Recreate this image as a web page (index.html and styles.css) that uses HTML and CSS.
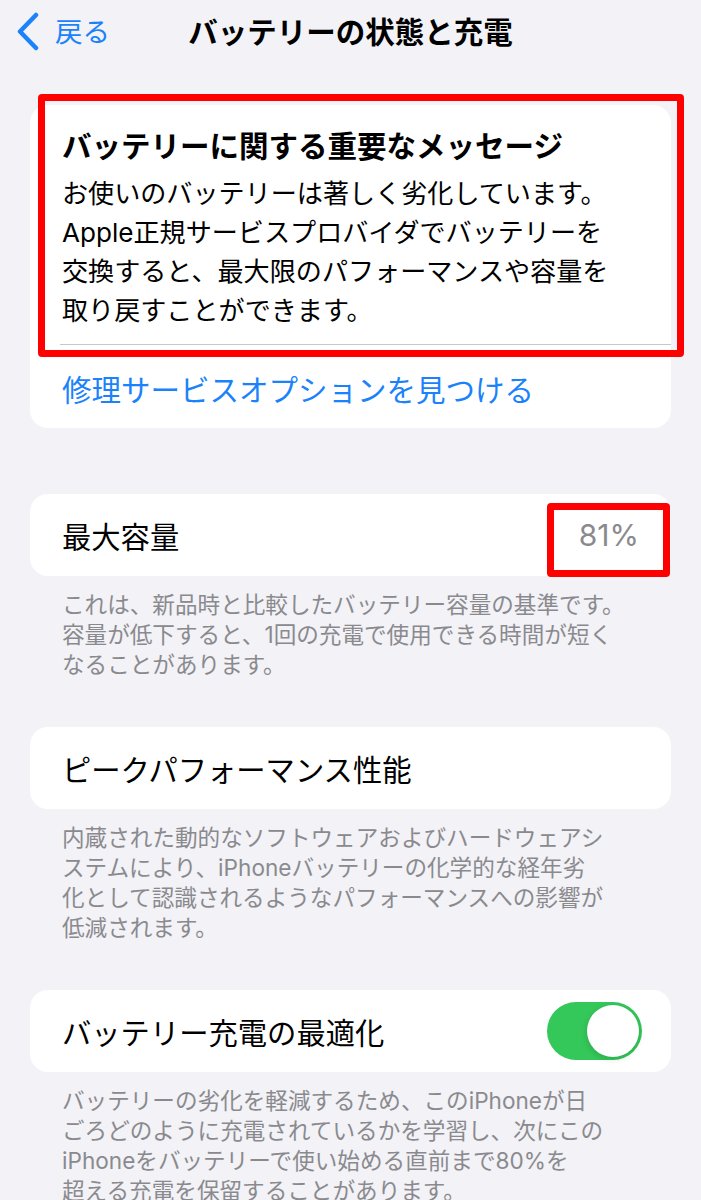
FILE: index.html
```html
<!DOCTYPE html>
<html lang="ja">
<head>
    <meta charset="UTF-8">
    <meta name="viewport" content="width=device-width, initial-scale=1.0">
    <title>バッテリーの状態と充電</title>
    <link rel="stylesheet" href="styles.css">
</head>
<body>
    <!-- ナビゲーションバー -->
    <nav class="navbar">
        <a href="#" class="nav-back">
            <svg class="nav-chevron" width="24" height="40" viewBox="0 0 24 40">
                <path d="M20 3 L4 19.5 L20 36" fill="none" stroke="#1a82fb" stroke-width="4.5" stroke-linecap="round" stroke-linejoin="round"/>
            </svg>
            <span>戻る</span>
        </a>
        <h1 class="nav-title">バッテリーの状態と充電</h1>
        <span></span>
    </nav>

    <main class="settings">
        <!-- 重要なメッセージ -->
        <section class="card notice-card">
            <div class="notice">
                <h2 class="notice-title">バッテリーに関する重要なメッセージ</h2>
                <p class="notice-text">お使いのバッテリーは著しく劣化しています。<br>Apple正規サービスプロバイダでバッテリーを<br>交換すると、最大限のパフォーマンスや容量を<br>取り戻すことができます。</p>
            </div>
            <div class="row">
                <a href="#" class="row-link">修理サービスオプションを見つける</a>
            </div>
            <div class="highlight notice-highlight"></div>
        </section>

        <!-- 最大容量 -->
        <section class="group">
            <div class="card row capacity-row">
                <span class="row-label">最大容量</span>
                <span class="row-value">81%</span>
                <div class="highlight value-highlight"></div>
            </div>
            <p class="footnote">これは、新品時と比較したバッテリー容量の基準です。<br>容量が低下すると、1回の充電で使用できる時間が短く<br>なることがあります。</p>
        </section>

        <!-- ピークパフォーマンス性能 -->
        <section class="group">
            <div class="card row">
                <span class="row-label">ピークパフォーマンス性能</span>
            </div>
            <p class="footnote">内蔵された動的なソフトウェアおよびハードウェアシ<br>ステムにより、iPhoneバッテリーの化学的な経年劣<br>化として認識されるようなパフォーマンスへの影響が<br>低減されます。</p>
        </section>

        <!-- 充電の最適化 -->
        <section class="group">
            <div class="card row">
                <span class="row-label">バッテリー充電の最適化</span>
                <span class="switch is-on"><span class="switch-knob"></span></span>
            </div>
            <p class="footnote">バッテリーの劣化を軽減するため、このiPhoneが日<br>ごろどのように充電されているかを学習し、次にこの<br>iPhoneをバッテリーで使い始める直前まで80%を<br>超える充電を保留することがあります。</p>
        </section>
    </main>
</body>
</html>
```

FILE: styles.css
```css
/* 基本 */
* { margin: 0; padding: 0; box-sizing: border-box; }
body {
    background: #F2F2F7;
    font-family: 'Inter', 'Noto Sans CJK JP', sans-serif;
    color: #000;
    overflow: hidden;
}

/* ナビゲーションバー */
.navbar { height: 64px; padding-bottom: 4px; display: grid; grid-template-columns: 1fr auto 1fr; align-items: center; }
.nav-back { display: flex; align-items: center; gap: 15px; padding-left: 16px; color: #1a82fb; text-decoration: none; font-size: 27.5px; }
.nav-chevron { display: block; margin-top: 4px; }
.nav-title { font-size: 29.5px; font-weight: 700; }

/* カード */
.settings { padding: 0 30px; }
.card { background: #fff; border-radius: 18px; position: relative; }
.row { min-height: 82px; display: flex; align-items: center; justify-content: space-between; padding: 0 30px 0 32px; }
.row-label { font-size: 29.3px; }
.row-value { font-size: 30px; color: #8a8a8e; padding-right: 2px; }
.row-link { font-size: 29.5px; color: #1a82fb; text-decoration: none; margin-top: 2px; }

/* メッセージ */
.notice-card { margin-top: 41px; }
.notice-card .row { min-height: 83px; }
.notice { margin-left: 30px; padding: 23px 0 14px 2px; border-bottom: 1px solid #c8c8cc; }
.notice-title { font-size: 29.5px; font-weight: 700; line-height: 36px; margin-bottom: 10px; }
.notice-text { font-size: 26.1px; line-height: 39px; }

/* グループと注釈 */
.group { margin-top: 66px; }
.group + .group { margin-top: 47px; }
.footnote { font-size: 22.6px; line-height: 30px; color: #8a8a8e; padding: 0 0 0 32px; margin-top: 14px; }

/* 赤枠 */
.highlight { position: absolute; border: 7px solid #ff0000; border-radius: 4px; pointer-events: none; }
.notice-highlight { left: 8px; top: -11px; width: 646px; height: 263px; }
.value-highlight { left: 517px; top: 9px; width: 123px; height: 74px; }

/* スイッチ */
.switch { width: 95px; height: 58px; border-radius: 29px; background: #34C759; position: relative; flex: none; margin-right: -1px; }
.switch-knob { position: absolute; top: 3px; right: 3px; width: 52px; height: 52px; border-radius: 50%; background: #fff; box-shadow: 0 2px 6px rgba(0,0,0,0.15); }
```
